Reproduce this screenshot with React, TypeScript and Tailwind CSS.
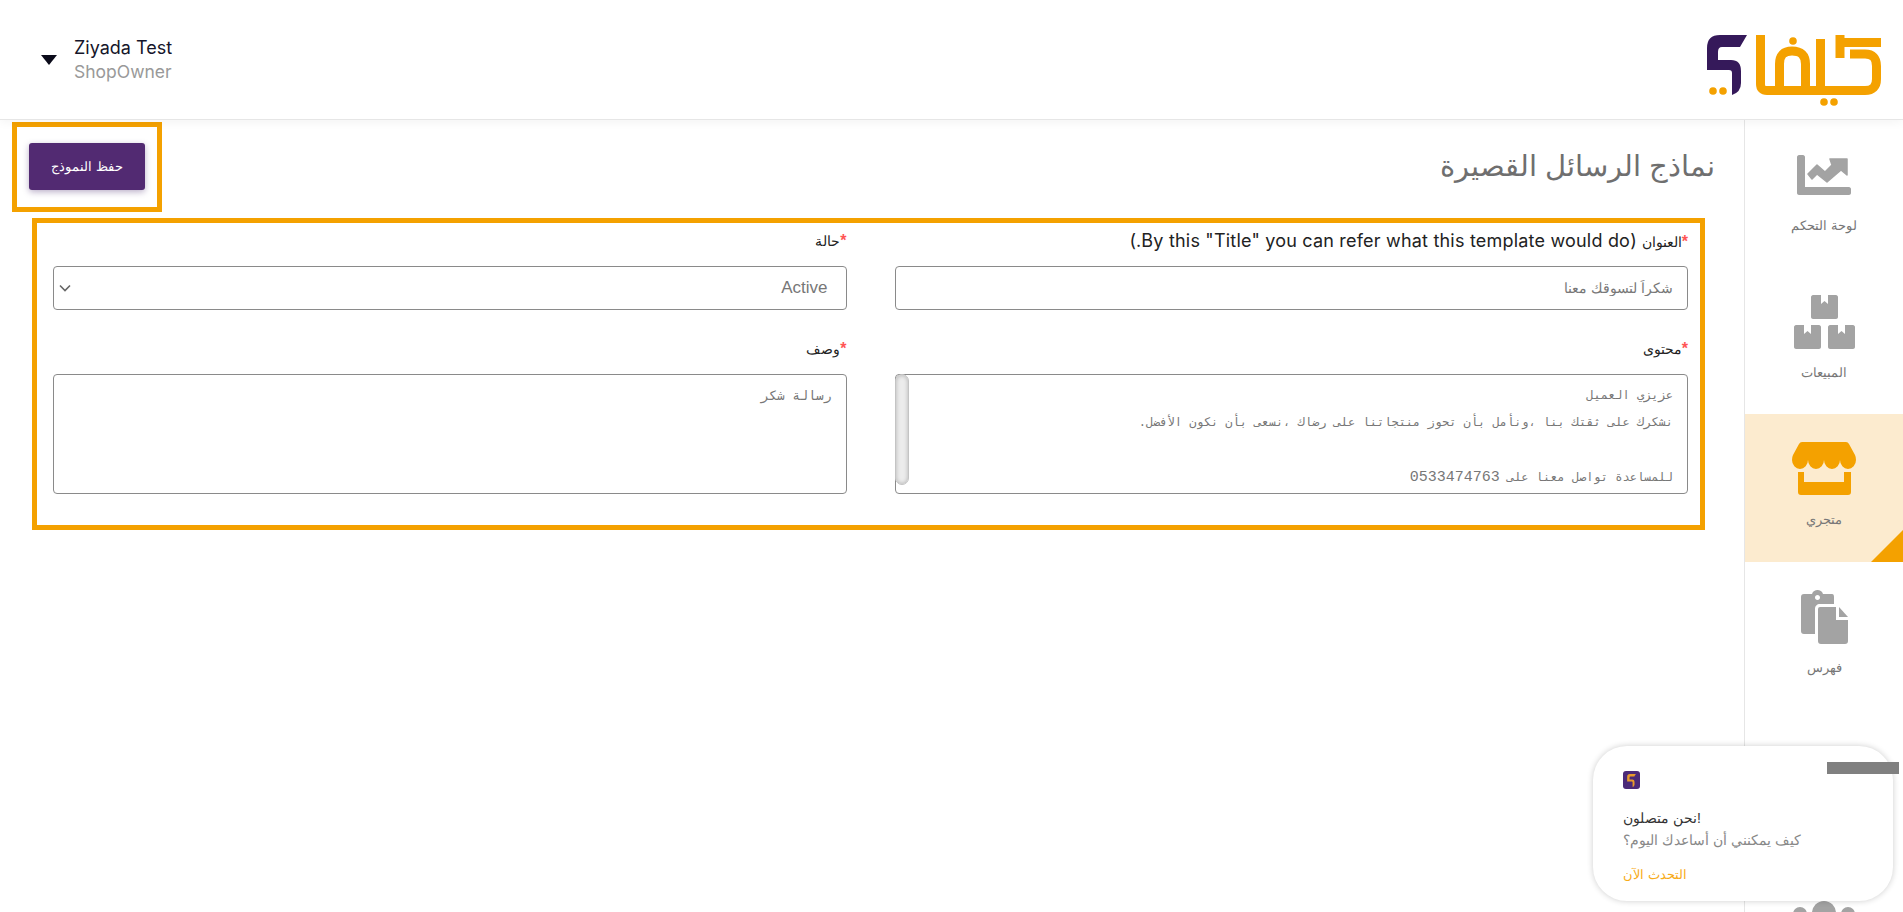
import React from 'react';

const sShape = 'M40 0H13Q0 0 0 13V35H22Q25 35 25 38V60Q34 57 34 48V36Q34 25 24 25H11V17Q11 12 15 12H33Z';

const Logo = () => (
    <svg width="174" height="71" viewBox="0 0 174 71" fill="none">
        <path d={sShape} fill="#35195a" />
        <circle cx="6" cy="56" r="3.8" fill="#f4a100" />
        <circle cx="16" cy="56" r="3.8" fill="#f4a100" />
        <g stroke="#f4a100" strokeWidth="9">
            <path d="M53.5 0V49Q53.5 55.5 60 55.5H158Q169.5 55.5 169.5 44V31Q169.5 19 158 19H143" />
            <path d="M72.5 55V29Q72.5 16 85 16Q98.5 16 98.5 29V55" />
            <path d="M113.5 4V55" />
            <path d="M133 0V7.5H174M133 5V23" />
        </g>
        <circle cx="86" cy="6" r="3.8" fill="#f4a100" />
        <circle cx="117" cy="67" r="3.8" fill="#f4a100" />
        <circle cx="127" cy="67" r="3.8" fill="#f4a100" />
    </svg>
);

const ChartIcon = () => (
    <svg width="54" height="40" viewBox="0 0 54 40" fill="#a3a3a3">
        <path d="M0 2C0 1 1 0 2 0H6C7 0 8 1 8 2V32H52C53 32 54 33 54 34V38C54 39 53 40 52 40H2C1 40 0 39 0 38Z" />
        <path d="M11 19L20 10L28 17L35 10L33 4H50V20L44 15L30 27L20 19L15 24Z" stroke="#a3a3a3" strokeWidth="1.5" strokeLinejoin="round" />
    </svg>
);

const BoxesIcon = () => (
    <svg width="61" height="54" viewBox="0 0 61 54" fill="#a3a3a3">
        <path d="M17 2C17 1 18 0 19 0H27V9L30.500 6L34 9V0H42C43 0 44 1 44 2V22C44 23 43 24 42 24H19C18 24 17 23 17 22Z" />
        <path d="M0 32C0 31 1 30 2 30H10V39L13.500 36L17 39V30H25C26 30 27 31 27 32V52C27 53 26 54 25 54H2C1 54 0 53 0 52Z" />
        <path d="M34 32C34 31 35 30 36 30H44V39L47.500 36L51 39V30H59C60 30 61 31 61 32V52C61 53 60 54 59 54H36C35 54 34 53 34 52Z" />
    </svg>
);

const StoreIcon = () => (
    <svg width="64" height="54" viewBox="0 0 64 54" fill="#f4a100">
        <path d="M10 0H54Q56 0 57 2L63 13Q64 15 64 18A8 9 0 0 1 48 18A8 9 0 0 1 32 18A8 9 0 0 1 16 18A8 9 0 0 1 0 18Q0 15 1 13L7 2Q8 0 10 0Z" />
        <path d="M6 30H12V40H52V30H59V50Q59 53 56 53H9Q6 53 6 50Z" />
    </svg>
);

const CatalogIcon = () => (
    <svg width="47" height="54" viewBox="0 0 47 54" fill="#a3a3a3">
        <path d="M3 4H11C12 1 14 0 16.500 0C19 0 21 1 22 4H31C32.500 4 33 5 33 7V14H19C16 14 14 16 14 19V44H3C1 44 0 43 0 41V7C0 5 1 4 3 4ZM16.500 5C15 5 14 6 14 7.500C14 9 15 10 16.500 10C18 10 19 9 19 7.500C19 6 18 5 16.500 5Z" />
        <path d="M19 17H35V30H47V51Q47 54 44 54H20Q17 54 17 51V19Q17 17 19 17Z" />
        <path d="M38 17L47 27H38Z" />
    </svg>
);

const navItems = [
    { label: 'لوحة التحكم', icon: <ChartIcon /> },
    { label: 'المبيعات', icon: <BoxesIcon /> },
    { label: 'متجري', icon: <StoreIcon />, active: true },
    { label: 'فهرس', icon: <CatalogIcon /> },
    { label: '', icon: <div className="mt-[12px] w-[60px] h-[54px] rounded-md bg-[#a3a3a3]" /> },
    {
        label: '',
        icon: (
            <div className="flex items-start gap-[5px]">
                <div className="mt-[9px] w-[14px] h-[14px] rounded-full bg-[#a3a3a3]" />
                <div className="mt-[3px] w-[24px] h-[24px] rounded-full bg-[#a3a3a3]" />
                <div className="mt-[9px] w-[14px] h-[14px] rounded-full bg-[#a3a3a3]" />
            </div>
        ),
    },
];

const Label = ({ text, note }: { text: string; note?: string }) => (
    <label className="block h-5 text-right text-[14px] leading-5 text-[#222] whitespace-nowrap">
        <span className="text-[#f55] font-bold text-[16px]">*</span>
        <span className={note ? '' : 'font-medium'}>{text}</span>
        {note && <span className="text-[18px] tracking-[0.2px] font-['Inter',sans-serif]"> {note}</span>}
    </label>
);

const fieldClass = 'block w-full border border-[#8a8a8a] rounded-[4px] bg-white text-[#777] outline-none';

export default function App() {
    return (
        <div className="h-screen overflow-hidden bg-white relative font-['Liberation_Sans',sans-serif]">
            {/* Header */}
            <header className="h-[120px] flex items-start justify-between border-b border-[#e6e6e6] shadow-[0_2px_10px_rgba(0,0,0,0.05)] relative z-10 bg-white">
                <div className="flex items-center pt-[36px] pl-[41px]">
                    <div className="w-0 h-0 border-l-[8px] border-r-[8px] border-t-[10px] border-l-transparent border-r-transparent border-t-[#0b0b1a] mr-[17px]" />
                    <div className="font-['Inter',sans-serif]">
                        <div className="text-[18px] leading-[24px] text-[#15152a]">Ziyada Test</div>
                        <div className="text-[17.500px] leading-[24px] text-[#999]">ShopOwner</div>
                    </div>
                </div>
                <div className="pt-[35px] pr-[22px]">
                    <Logo />
                </div>
            </header>

            <div className="flex">
                {/* Main */}
                <main className="flex-1 min-w-0">
                    <div className="flex items-start justify-between pt-[2px] pl-[12px] pr-[29px]">
                        <div className="border-[5px] border-[#f4a100] w-[150px] h-[90px] pl-[12px] pt-[16px]">
                            <button className="w-[116px] h-[47px] rounded-[3px] bg-[#522a72] text-white text-[13px] shadow-[0_2px_6px_rgba(60,30,100,0.35)]">
                                حفظ النموذج
                            </button>
                        </div>
                        <h1 dir="rtl" className="mt-[24px] text-[29px] leading-[40px] text-[#6f6f6f]">
                            نماذج الرسائل القصيرة
                        </h1>
                    </div>

                    <div dir="rtl" className="mt-[6px] ml-[32px] mr-[39px] border-[5px] border-[#f4a100] pr-[12px] pl-[16px] pt-[8px] pb-[31px]">
                        <div className="grid grid-cols-2 gap-x-[48px]">
                            <div>
                                <Label text="العنوان" note={'(By this "Title" you can refer what this template would do.)'} />
                                <input
                                    readOnly
                                    dir="rtl"
                                    defaultValue="شكراً لتسوقك معنا"
                                    className={`${fieldClass} mt-[15px] h-[44px] px-[14px] text-[14px]`}
                                />
                            </div>
                            <div>
                                <Label text="حالة" />
                                <div className={`${fieldClass} mt-[15px] h-[44px] flex items-center justify-between pr-[18px] pl-[5px] text-[17px]`}>
                                    <span>Active</span>
                                    <svg width="12" height="8" viewBox="0 0 12 8" fill="none" stroke="#666" strokeWidth="1.6">
                                        <path d="M1 1.500L6 6.500L11 1.500" />
                                    </svg>
                                </div>
                            </div>
                            <div className="mt-[29px]">
                                <Label text="محتوى" />
                                <div className="relative mt-[15px]">
                                    <div
                                        dir="rtl"
                                        className={`${fieldClass} h-[120px] overflow-hidden whitespace-pre-wrap px-[14px] pt-[8px] text-[12px] leading-[27px] font-['Liberation_Mono',monospace]`}
                                    >
                                        {'عزيزي العميل\nنشكرك على ثقتك بنا ،ونأمل بأن تحوز منتجاتنا على رضاك ،نسعى بأن نكون الأفضل.\n\nللمساعدة تواصل معنا على '}
                                        <span className="text-[15px]">0533474763</span>
                                    </div>
                                    <div className="absolute left-0 top-0 w-[14px] h-[111px] rounded-full bg-[#ececec] border border-[#c4c4c4] shadow-[inset_0_0_4px_rgba(0,0,0,0.25)]" />
                                </div>
                            </div>
                            <div className="mt-[29px]">
                                <Label text="وصف" />
                                <textarea
                                    readOnly
                                    dir="rtl"
                                    defaultValue="رسالة شكر"
                                    className={`${fieldClass} mt-[15px] h-[120px] resize-none px-[14px] pt-[8px] text-[13px] leading-[27px] font-['Liberation_Mono',monospace]`}
                                />
                            </div>
                        </div>
                    </div>
                </main>

                {/* Side nav */}
                <aside className="w-[159px] shrink-0 border-l border-[#e6e6e6]">
                    {navItems.map((item, i) => (
                        <div
                            key={i}
                            className={`relative flex flex-col items-center pt-[28px] overflow-hidden ${item.active ? 'h-[148px] bg-[#fcebcf]' : 'h-[147px]'}`}
                        >
                            <div className="h-[54px] flex items-start justify-center">
                                <div className="min-h-[54px] flex items-center">{item.icon}</div>
                            </div>
                            {item.label && <div className="mt-[14px] text-[13px] leading-5 text-[#777]">{item.label}</div>}
                            {item.active && (
                                <div className="absolute right-0 bottom-0 w-0 h-0 border-l-[32px] border-b-[32px] border-l-transparent border-b-[#f4a100]" />
                            )}
                        </div>
                    ))}
                </aside>
            </div>

            {/* Chat popup */}
            <div className="absolute left-[1593px] top-[746px] w-[300px] h-[155px] rounded-[34px] bg-white shadow-[0_0_6px_rgba(0,0,0,0.2)] z-20 pl-[30px] pt-[25px]">
                <div className="w-[17px] h-[18px] rounded-[3px] bg-[#4b2a78] flex items-center justify-center">
                    <svg width="9" height="13" viewBox="0 0 40 60" fill="#e89a2c">
                        <path d={sShape} />
                    </svg>
                </div>
                <div className="mt-[18px] whitespace-nowrap">
                    <div className="text-[14px] leading-[22px] text-[#333]">نحن متصلون!</div>
                    <div className="text-[14px] leading-[22px] text-[#888]">كيف يمكنني أن أساعدك اليوم؟</div>
                    <div className="mt-[14px] text-[13px] leading-[20px] text-[#f8ac19]">التحدث الآن</div>
                </div>
                <div className="absolute left-[234px] top-[16px] w-[72px] h-[12px] bg-[#808080]" />
            </div>
        </div>
    );
}
